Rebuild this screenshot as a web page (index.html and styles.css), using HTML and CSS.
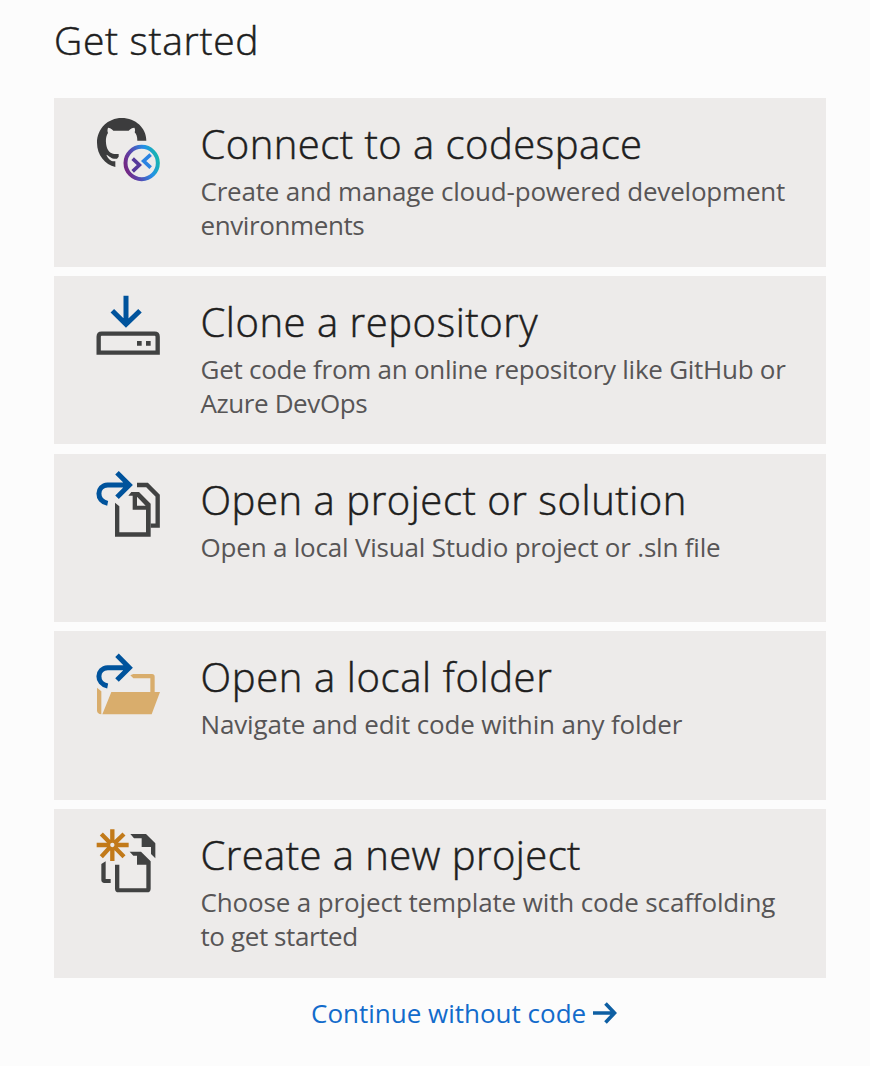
FILE: index.html
```html
<!DOCTYPE html>
<html lang="en">
<head>
<meta charset="utf-8">
<title>Get started</title>
<link rel="stylesheet" href="styles.css">
</head>
<body>
<main class="start">
  <h1 class="heading"><span>Get started</span></h1>
  <div class="cards">
    <a class="card">
      <svg class="icon" viewBox="33 24 192 216">
        <defs><linearGradient id="ring" x1="0" y1=".65" x2="1" y2=".35"><stop offset="0" stop-color="#742783"/><stop offset=".3" stop-color="#5848b0"/><stop offset=".7" stop-color="#2490e8"/><stop offset="1" stop-color="#16b5b0"/></linearGradient></defs>
        <path fill="#3c3c3d" d="M184 107H157C157 94 154 87 149 82C151 76 150 71 148 68C142 68 136 71 131 77H85C80 71 74 68 69 68C67 74 67 79 69 84C61 96 62 112 65 125C69 139 77 145 88 147H101V155L96 161C79 163 75 154 64 149C70 161 76 170 91 169V186C60 178 36 150 36 113C36 71 69 39 110 39C152 39 184 69 184 107Z"/>
        <circle cx="170" cy="174" r="48.500" fill="none" stroke="url(#ring)" stroke-width="12"/>
        <path d="M143 161L163 180L143 199" fill="none" stroke="#56399a" stroke-width="11"/>
        <path d="M197 149L176 168L197 188" fill="none" stroke="#2b83e2" stroke-width="11"/>
      </svg>
      <div class="text"><h2 class="title t1">Connect to a codespace</h2><p class="desc d1">Create and manage cloud-powered development<br><span class="tight">environments</span></p></div>
    </a>
    <a class="card">
      <svg class="icon" viewBox="33 33 192 216" fill="none">
        <path d="M123 47V133M82 92L123 133L165 92" stroke="#00539c" stroke-width="15"/>
        <path d="M41 218V170Q41 161 50 161H209Q218 161 218 170V218Z" stroke="#414242" stroke-width="13"/>
        <path d="M156 183h14v14h-14zM183 183h14v14h-14z" fill="#414242"/>
      </svg>
      <div class="text"><h2 class="title t2">Clone a repository</h2><p class="desc d2">Get code from an online repository like GitHub or<br><span class="tight">Azure DevOps</span></p></div>
    </a>
    <a class="card">
      <svg class="icon" viewBox="33 27 192 216" fill="none">
        <path d="M96 38L133 75L96 112M133 75H68C34 77 32 123 68 130" stroke="#00539c" stroke-width="15"/>
        <path d="M90 128L103 139V217H183V149H143V107H130L139 96H162L197 131V230H90ZM156 110V137H182Z" fill="#414242" fill-rule="evenodd"/>
        <path d="M156 75H186L218 107V197H197" stroke="#414242" stroke-width="13"/>
      </svg>
      <div class="text"><h2 class="title t3">Open a project or solution</h2><p class="desc d3">Open a local Visual Studio project or .sln file</p></div>
    </a>
    <a class="card">
      <svg class="icon" viewBox="33 18 192 216" fill="none">
        <path d="M96 46L133 83L96 120M133 83H68C34 85 32 131 68 138" stroke="#00539c" stroke-width="15"/>
        <path d="M79 156H196V115H145L136 106L145 102H201Q209 102 209 110V156H225L200 223H52Z" fill="#d9ad6c"/>
        <path d="M36 143L49 154V223Q36 222 36 211Z" fill="#d9ad6c"/>
      </svg>
      <div class="text"><h2 class="title t4">Open a local folder</h2><p class="desc d4">Navigate and edit code within any folder</p></div>
    </a>
    <a class="card">
      <svg class="icon" viewBox="33 18 192 216" fill="none">
        <path d="M82 34V72M82 90V129M35 81H73M91 81H131M49 48L75 74M89 88L117 116M117 48L90 74M75 88L49 116" stroke="#c27a1a" stroke-width="13"/>
        <circle cx="82" cy="81" r="11" stroke="#c27a1a" stroke-width="9"/>
        <path d="M136 48H183L211 76V121L198 108V87H170V61H147ZM134 101H168L197 130V212Q197 223 186 223H101Q90 223 90 212V140H103V211H184V140H156V113H145ZM49 138L62 130V183H77V195H58Q49 194 49 186Z" fill="#414242"/>
      </svg>
      <div class="text"><h2 class="title t5">Create a new project</h2><p class="desc d5">Choose a project template with code scaffolding<br><span class="tight">to get started</span></p></div>
    </a>
  </div>
  <a class="skip"><span>Continue without code</span>
    <svg class="arrow" viewBox="0 0 24 24" fill="none" stroke="#0e5fa3" stroke-width="3.600"><path d="M0 12H21M12.500 2.500L21.500 12L12.500 21.500"/></svg>
  </a>
</main>
</body>
</html>
```
FILE: styles.css
```css
* { box-sizing: border-box; }
body {
  margin: 0;
  background: #fcfcfc;
  color: #1e1e1e;
  font-family: "Open Sans", "Noto Sans", sans-serif;
}
.start { height: 1066px; padding: 13px 44px 0 54px; }
.heading { margin: 0; height: 85px; font-size: 39px; line-height: 54px; font-weight: 300; letter-spacing: .7px; white-space: nowrap; -webkit-text-stroke: .5px #1e1e1e; }
.cards { display: grid; grid-template-rows: repeat(5, 168.6px); row-gap: 9.2px; }
.card { display: flex; gap: 40.500px; padding: 15px 0 0 42px; background: #edebea; }
.icon { width: 64px; height: 72px; flex: none; }
.title { margin: 4px 0 0; font-size: 40px; line-height: 54px; font-weight: 300; white-space: nowrap; -webkit-text-stroke: .5px #1e1e1e; }
.t1 { letter-spacing: .46px; }
.t2 { letter-spacing: .53px; }
.t3 { letter-spacing: .55px; }
.t4 { letter-spacing: .63px; }
.t5 { letter-spacing: .42px; }
.desc { margin: 3px 0 0; font-size: 26px; line-height: 34px; color: #575556; white-space: nowrap; }
.d1 { letter-spacing: -.2px; }
.d2 { letter-spacing: -.26px; }
.d3 { letter-spacing: -.2px; }
.d4 { letter-spacing: -.15px; }
.d5 { letter-spacing: -.14px; }
.tight { letter-spacing: -.4px; }
.skip { display: flex; align-items: center; gap: 7px; margin: 17px 0 0 257px; font-size: 26px; line-height: 36px; color: #126bcb; white-space: nowrap; }
.arrow { width: 24px; height: 24px; }
```
